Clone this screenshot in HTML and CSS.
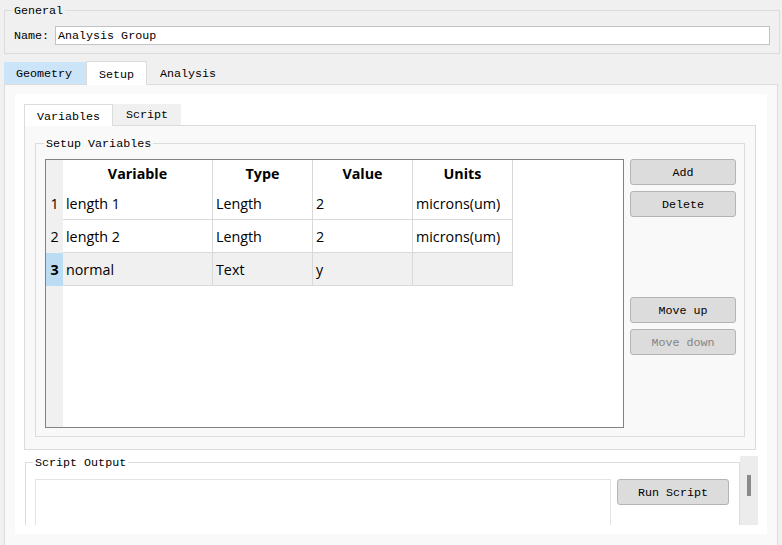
FILE: index.html
```html
<!DOCTYPE html>
<html lang="en">
<head>
    <meta charset="UTF-8">
    <title>Analysis Group</title>
    <link rel="stylesheet" href="styles.css">
</head>
<body>
<div class="window">
    <div class="group general">
        <span class="group-title">General</span>
        <div class="name-row">
            <label for="name">Name:</label>
            <input id="name" class="name-input" type="text" value="Analysis Group"/>
        </div>
    </div>

    <div class="tabbar outer-tabs">
        <div class="tab hover geometry">Geometry</div>
        <div class="tab active setup">Setup</div>
        <div class="tab analysis">Analysis</div>
    </div>

    <div class="outer-pane">
        <div class="scroll">
            <div class="tabbar inner-tabs">
                <div class="tab active variables">Variables</div>
                <div class="tab idle script">Script</div>
            </div>
            <div class="inner-pane">
                <div class="group vars-group">
                    <span class="group-title">Setup Variables</span>
                    <div class="vars-body">
                        <div class="grid">
                            <div class="vhead">
                                <div class="corner"></div>
                                <div class="num">1</div>
                                <div class="num">2</div>
                                <div class="num current">3</div>
                            </div>
                            <table class="cells">
                                <tr class="head">
                                    <th class="c1">Variable</th>
                                    <th>Type</th>
                                    <th>Value</th>
                                    <th>Units</th>
                                </tr>
                                <tr>
                                    <td class="c1">length 1</td>
                                    <td>Length</td>
                                    <td>2</td>
                                    <td>microns(um)</td>
                                </tr>
                                <tr>
                                    <td class="c1">length 2</td>
                                    <td>Length</td>
                                    <td>2</td>
                                    <td>microns(um)</td>
                                </tr>
                                <tr class="selected">
                                    <td class="c1">normal</td>
                                    <td>Text</td>
                                    <td>y</td>
                                    <td></td>
                                </tr>
                            </table>
                        </div>
                        <div class="side-buttons">
                            <button class="btn">Add</button>
                            <button class="btn">Delete</button>
                            <button class="btn move-up">Move up</button>
                            <button class="btn" disabled>Move down</button>
                        </div>
                    </div>
                </div>
            </div>
            <div class="output-view">
                <div class="group output-group">
                    <span class="group-title">Script Output</span>
                    <div class="output-body">
                        <div class="output-text"></div>
                        <button class="btn run">Run Script</button>
                    </div>
                </div>
                <div class="vscroll"><div class="thumb"></div></div>
            </div>
        </div>
    </div>
</div>
</body>
</html>
```

FILE: styles.css
```css
body {
    margin: 0;
    background-color: #f0f0f0;
    font-family: "Liberation Mono", monospace;
    font-size: 11.7px;
    color: #000;
    overflow: hidden;
}

.window {
    width: 782px;
    height: 545px;
    padding: 10px 0 0 4px;
    box-sizing: border-box;
    overflow: hidden;
}

/* group boxes */
.group {
    position: relative;
    border: 1px solid #dcdcdc;
    box-sizing: border-box;
}

.group-title {
    position: absolute;
    top: -7px;
    left: 7px;
    padding: 0 2px;
    line-height: 14px;
    background-color: #f0f0f0;
}

.general {
    width: 776px;
    height: 44px;
    padding: 15px 9px 0 9px;
}

.name-row {
    display: flex;
    align-items: center;
}

.name-row label {
    width: 41px;
    padding-top: 1px;
}

.name-input {
    flex: 1;
    height: 19px;
    box-sizing: border-box;
    margin: 0;
    border: 1px solid #c3c3c3;
    padding: 1px 2px 0 2px;
    font-family: "Liberation Mono", monospace;
    font-size: 11.7px;
    color: #000;
    background: #fff;
}

/* tabs */
.tabbar {
    display: flex;
    align-items: flex-end;
}

.tab {
    box-sizing: border-box;
    display: flex;
    align-items: center;
}

.tab.active {
    position: relative;
    z-index: 1;
    background-color: #fff;
    border: 1px solid #dcdcdc;
    border-bottom: none;
    margin-bottom: -1px;
}

.outer-tabs {
    margin-top: 7px;
    height: 23px;
}

.outer-tabs .tab {
    height: 22px;
    padding-left: 12px;
    padding-top: 1px;
}

.outer-tabs .tab.active {
    height: 24px;
    padding-top: 3px;
}

.hover {
    background-color: #cce4f7;
}

.geometry { width: 82px; }
.setup { width: 61px; }
.analysis { width: 80px; padding-left: 13px !important; }

.outer-pane {
    width: 774px;
    height: 480px;
    box-sizing: border-box;
    border: 1px solid #dcdcdc;
    background-color: #f9f9f9;
    padding: 9px 10px 10px 10px;
}

.scroll {
    height: 440px;
    background-color: #fff;
    padding: 10px 9px 0 9px;
    box-sizing: border-box;
}

.inner-tabs {
    height: 21px;
}

.inner-tabs .tab {
    height: 21px;
    padding-top: 1px;
}

.inner-tabs .tab.active {
    height: 22px;
    padding-top: 2px;
}

.variables {
    width: 89px;
    padding-left: 12px;
}

.script {
    width: 68px;
    padding-left: 13px;
    background-color: #f0f0f0;
}

.inner-pane {
    width: 732px;
    height: 325px;
    box-sizing: border-box;
    border: 1px solid #dcdcdc;
    background-color: #f9f9f9;
    padding: 17px 10px 0 10px;
}

.vars-group {
    height: 294px;
}

.vars-group .group-title {
    left: 8px;
    background-color: #f9f9f9;
}

.vars-body {
    display: flex;
    gap: 6px;
    padding: 15px 0 0 9px;
}

/* variables table */
.grid {
    display: flex;
    width: 579px;
    height: 269px;
    box-sizing: border-box;
    border: 1px solid #828282;
    background-color: #fff;
    font-family: "Open Sans", "Noto Sans", sans-serif;
    font-size: 14.3px;
}

.vhead {
    width: 17px;
    background-color: #f0f0f0;
}

.corner {
    height: 27px;
}

.num {
    height: 33px;
    display: flex;
    align-items: center;
    justify-content: center;
}

.num.current {
    background-color: #bcdcf4;
    font-weight: bold;
}

.cells {
    border-collapse: separate;
    border-spacing: 0;
    align-self: flex-start;
}

.cells th,
.cells td {
    padding: 0 0 0 3px;
    box-sizing: border-box;
    border-right: 1px solid #d8d8d8;
    text-align: left;
    white-space: nowrap;
}

.cells th {
    height: 27px;
    font-weight: bold;
    text-align: center;
    padding: 0;
}

.cells td {
    height: 33px;
    border-bottom: 1px solid #d8d8d8;
}

.cells .c1 {
    width: 150px;
}

.cells th:not(.c1),
.cells td:not(.c1) {
    width: 100px;
}

.selected td {
    background-color: #f0f0f0;
}

/* buttons */
.side-buttons {
    display: flex;
    flex-direction: column;
    gap: 6px;
}

.btn {
    width: 106px;
    height: 26px;
    margin: 0;
    padding: 1px 0 0 0;
    box-sizing: border-box;
    border: 1px solid #b4b4b4;
    border-radius: 3px;
    background-color: #dcdcdc;
    font-family: "Liberation Mono", monospace;
    font-size: 11.7px;
    color: #000;
}

.btn:disabled {
    color: #848484;
}

.move-up {
    margin-top: 74px;
}

/* script output */
.output-view {
    display: flex;
    width: 734px;
    height: 69px;
    margin-top: 6px;
    overflow: hidden;
}

.output-group {
    width: 715px;
    height: 130px;
    margin: 6px 0 0 1px;
    flex-shrink: 0;
}

.output-group .group-title {
    background-color: #fff;
}

.output-body {
    display: flex;
    gap: 6px;
    padding: 16px 10px 0 9px;
}

.output-text {
    width: 576px;
    height: 100px;
    box-sizing: border-box;
    border: 1px solid #e3e3e3;
    background: #fff;
}

.run {
    width: 112px;
}

.vscroll {
    width: 18px;
    height: 69px;
    background-color: #ececec;
    flex-shrink: 0;
}

.thumb {
    width: 4px;
    height: 21px;
    margin: 19px 0 0 7px;
    background-color: #8a8a8a;
}
```
